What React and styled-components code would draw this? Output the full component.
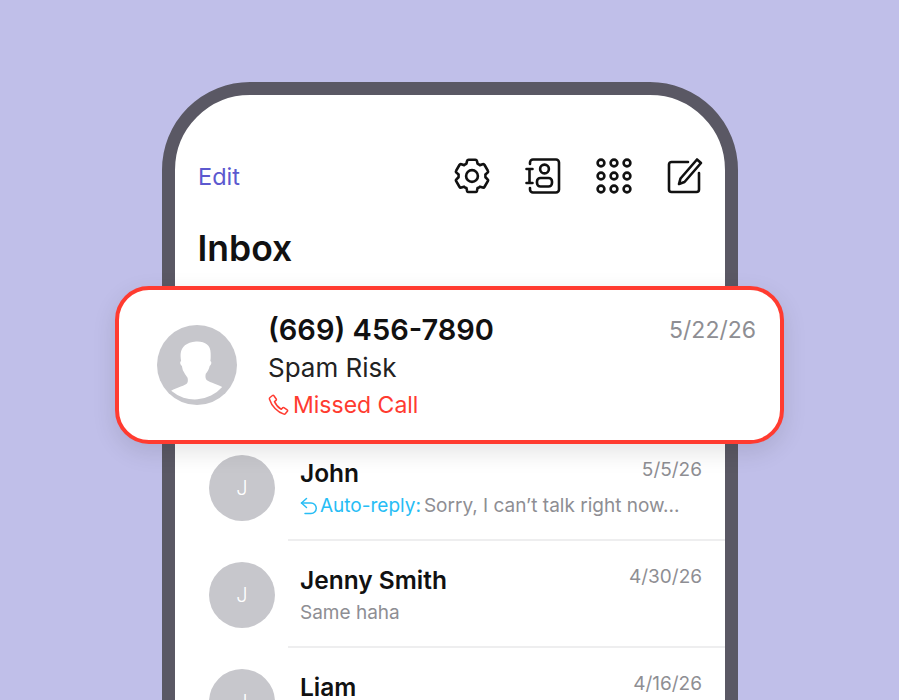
import styled, { createGlobalStyle } from "styled-components"

const GlobalStyle = createGlobalStyle`
html, body {
    margin: 0;
    padding: 0;
    background: #c0bfe9;
}
* {
    box-sizing: border-box;
}
`

const threads = [
    { name: "John", initial: "J", date: "5/5/26", autoReply: true, text: "Sorry, I can’t talk right now..." },
    { name: "Jenny Smith", initial: "J", date: "4/30/26", text: "Same haha" },
    { name: "Liam", initial: "J", date: "4/16/26", text: "" },
]

function GearIcon() {
    return (
        <svg width="38" height="38" viewBox="0.8 1 36 36" fill="none" stroke="#111" strokeWidth="2.5" strokeLinejoin="round">
            <path d="M15.6 3.6h6.4c.8 0 1.3.5 1.5 1.2l.6 2.6c.8.3 1.5.7 2.2 1.3l2.6-.8c.7-.2 1.4 0 1.8.7l3.1 5.3c.4.6.3 1.4-.3 1.9l-2 1.8c.1.9.1 1.7 0 2.6l2 1.8c.6.5.7 1.3.3 1.9l-3.1 5.3c-.4.7-1.1.9-1.8.7l-2.6-.8c-.7.6-1.4 1-2.2 1.3l-.6 2.6c-.2.7-.7 1.2-1.5 1.2h-6.4c-.8 0-1.3-.5-1.5-1.2l-.6-2.6c-.8-.3-1.5-.7-2.2-1.3l-2.6.8c-.7.2-1.4 0-1.8-.7l-3.1-5.3c-.4-.6-.3-1.4.3-1.9l2-1.8c-.1-.9-.1-1.7 0-2.6l-2-1.8c-.6-.5-.7-1.3-.3-1.9l3.1-5.3c.4-.7 1.1-.9 1.8-.7l2.6.8c.7-.6 1.4-1 2.2-1.3l.6-2.6c.2-.7.7-1.2 1.5-1.2z" />
            <circle cx="18.8" cy="19" r="5.6" />
        </svg>
    )
}

function ContactsIcon() {
    return (
        <svg width="38" height="38" viewBox="0 0 38 38" fill="none" stroke="#111" strokeWidth="2.6" strokeLinecap="round" strokeLinejoin="round">
            <path d="M6 7V5.500A3 3 0 0 1 9 2.500h23a3 3 0 0 1 3 3v27a3 3 0 0 1-3 3H9a3 3 0 0 1-3-3V31" />
            <path d="M2.500 12h6M5.500 12v14M2.500 26h6" />
            <circle cx="20.500" cy="12" r="4.400" />
            <rect x="13" y="21" width="15" height="8.500" rx="3.500" />
        </svg>
    )
}

function GridIcon() {
    const spots = [6, 19, 32]
    return (
        <svg width="38" height="38" viewBox="0 0 38 38" fill="none" stroke="#111" strokeWidth="2.6">
            {spots.map((y) => spots.map((x) => <circle key={`${x}-${y}`} cx={x} cy={y} r="3.4" />))}
        </svg>
    )
}

function ComposeIcon() {
    return (
        <svg width="38" height="38" viewBox="0 0 38 38" fill="none" stroke="#111" strokeWidth="2.6" strokeLinecap="round" strokeLinejoin="round">
            <path d="M22 5H5.500A2.500 2.500 0 0 0 3 7.500v25A2.500 2.500 0 0 0 5.500 35h25a2.500 2.500 0 0 0 2.500-2.500V16" />
            <path d="M31 2.500l4 3.500-16.500 19-5.500 2 1.500-5.500z" />
        </svg>
    )
}

function Silhouette() {
    return (
        <svg width="80" height="80" viewBox="0 0 82 82">
            <circle cx="41" cy="41" r="41" fill="#c7c7cc" />
            <path d="M40 17c9 -.5 15 3.500 15 12 0 2.500.2 5-.3 8 1.800.8 1 3.500-.7 5-.8 3.500-2.300 6-4 8-.4 1.500-.6 4 .3 5.500 1.500 2.500 10 4.500 16.500 8A37.500 37.500 0 0 1 14.500 67.500c6-3.500 15-5.500 16.500-8 .9-1.500.7-4 .3-5.500-1.700-2-3.300-4.500-4.800-7.500-.4-1.500-.6-3-1-4.500-1.700-1.500-2.500-4.200-.8-5-.5-3-.7-5.500-.4-8C25 23 30 17.500 40 17z" fill="#fff" />
        </svg>
    )
}

function PhoneGlyph() {
    return (
        <svg width="22" height="22" viewBox="0 0 22 22" fill="none" stroke="#ff3b30" strokeWidth="1.500" strokeLinejoin="round">
            <path d="M2 3.500 4.500 1.500c.5-.4 1-.3 1.400.2l2.300 3.300c.3.500.2 1-.2 1.400L6.500 7.600c1.300 3 3.700 5.800 6.800 7.700l1.200-1.400c.4-.4.900-.5 1.400-.2l3.300 2.200c.5.300.6.900.2 1.400l-1.900 2.300c-.4.500-1 .7-1.600.5C9.500 18.300 3.600 12 1.500 5.200 1.300 4.500 1.500 3.900 2 3.500z" />
        </svg>
    )
}

function ReplyGlyph() {
    return (
        <svg width="18" height="18" viewBox="0 0 18 18" fill="none" stroke="#27bdf5" strokeWidth="1.500" strokeLinecap="round" strokeLinejoin="round">
            <path d="M6.500 1.500 1.500 6l5 4.500" />
            <path d="M1.500 6H11a5.200 5.200 0 0 1 0 10.500H5" />
        </svg>
    )
}

function App() {
    return (
        <Stage>
            <GlobalStyle />
            <Phone>
                <Header>
                    <EditLink>Edit</EditLink>
                    <Tools>
                        <GearIcon />
                        <ContactsIcon />
                        <GridIcon />
                        <ComposeIcon />
                    </Tools>
                </Header>
                <Title>Inbox</Title>
                <MissedCard>
                    <Silhouette />
                    <CardBody>
                        <CardNumber>(669) 456-7890</CardNumber>
                        <CardLabel>Spam Risk</CardLabel>
                        <CardStatus>
                            <PhoneGlyph />
                            Missed Call
                        </CardStatus>
                    </CardBody>
                    <CardDate>5/22/26</CardDate>
                </MissedCard>
                <List>
                    {threads.map((t, index) => (
                        <Row key={index}>
                            <Avatar>{t.initial}</Avatar>
                            <RowBody>
                                <RowTop>
                                    <Name>{t.name}</Name>
                                    <RowDate>{t.date}</RowDate>
                                </RowTop>
                                <Preview>
                                    {t.autoReply && (
                                        <AutoReply>
                                            <ReplyGlyph />
                                            Auto-reply:
                                        </AutoReply>
                                    )}
                                    {t.text}
                                </Preview>
                            </RowBody>
                        </Row>
                    ))}
                </List>
            </Phone>
        </Stage>
    )
}

export default App

const Stage = styled.div`
    height: 700px;
    overflow: hidden;
    padding-top: 82px;
    background: #c0bfe9;
    font-family: "Inter", "Liberation Sans", sans-serif;
`

const Phone = styled.div`
    width: 576px;
    height: 760px;
    margin-left: 162px;
    background: #fff;
    border: 13px solid #5a5864;
    border-radius: 88px 88px 0 0;
`

const Header = styled.div`
    display: flex;
    align-items: center;
    justify-content: space-between;
    height: 38px;
    margin-top: 62px;
    padding: 0 21px 0 23px;
`

const EditLink = styled.div`
    font-size: 23.500px;
    color: #5c59cf;
`

const Tools = styled.div`
    display: flex;
    gap: 33px;
`

const Title = styled.div`
    margin: 33px 0 0 22.500px;
    font-size: 35.500px;
    line-height: 42px;
    font-weight: 600;
    color: #111;
`

const MissedCard = styled.div`
    position: relative;
    z-index: 2;
    display: flex;
    align-items: center;
    gap: 31px;
    height: 158px;
    margin: 15.500px -59px 0 -60px;
    padding: 0 24px 0 38px;
    background: #fff;
    border: 4px solid #ff3b30;
    border-radius: 34px;
    box-shadow: 0 8px 24px rgba(0, 0, 0, 0.11);
`

const CardBody = styled.div`
    flex: 1;
    display: flex;
    flex-direction: column;
    padding-top: 5px;
`

const CardNumber = styled.div`
    font-size: 29px;
    line-height: 38px;
    font-weight: 600;
    color: #111;
`

const CardLabel = styled.div`
    font-size: 26px;
    line-height: 37px;
    color: #222;
`

const CardStatus = styled.div`
    display: flex;
    align-items: center;
    gap: 3px;
    font-size: 23px;
    line-height: 38px;
    color: #ff3b30;
`

const CardDate = styled.div`
    align-self: flex-start;
    margin-top: 26px;
    font-size: 23px;
    color: #8e8e93;
`

const List = styled.div`
    display: flex;
    flex-direction: column;
    margin-top: -9.500px;
`

const Row = styled.div`
    display: flex;
    height: 107px;
    padding-left: 34px;
    gap: 13px;
`

const Avatar = styled.div`
    display: flex;
    align-items: center;
    justify-content: center;
    flex: none;
    width: 66px;
    height: 66px;
    margin-top: 21px;
    border-radius: 50%;
    background: #c7c7cc;
    color: #fff;
    font-size: 20px;
    font-weight: 300;
`

const RowBody = styled.div`
    flex: 1;
    padding: 24px 23px 0 12px;
    border-bottom: 2px solid #eeeeef;
`

const RowTop = styled.div`
    display: flex;
    justify-content: space-between;
    align-items: flex-start;
`

const Name = styled.div`
    font-size: 24.500px;
    line-height: 30px;
    font-weight: 600;
    color: #111;
`

const RowDate = styled.div`
    font-size: 19px;
    line-height: 22px;
    margin-top: 1px;
    color: #8e8e93;
`

const Preview = styled.div`
    display: flex;
    align-items: center;
    margin-top: 4px;
    font-size: 19px;
    line-height: 28px;
    color: #8e8e93;
`

const AutoReply = styled.span`
    display: flex;
    align-items: center;
    gap: 2px;
    margin-right: 3px;
    color: #27bdf5;
`
